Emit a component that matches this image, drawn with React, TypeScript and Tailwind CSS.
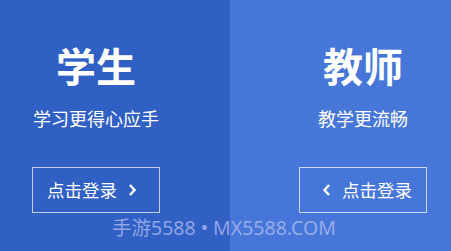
export default function App() {
  return (
    <div className="relative flex h-[251px] w-[451px] overflow-hidden font-['Noto_Sans','Noto_Sans_CJK_SC',sans-serif] text-white">
      <section className="flex w-[230px] bg-[#3060c4] pl-[32px] pt-[40px]">
        <Side title="学生" sub="学习更得心应手" dir="right" />
      </section>
      <section className="flex flex-1 justify-end bg-[#4677d8] pr-[24px] pt-[40px]">
        <Side title="教师" sub="教学更流畅" dir="left" />
      </section>
      <div className="pointer-events-none absolute left-[112px] top-[214px] text-[19.5px] leading-[28px] whitespace-nowrap text-[#b4bcef]/75">
        手游5588 • MX5588.COM
      </div>
    </div>
  )
}

function Side({ title, sub, dir }: { title: string; sub: string; dir: 'left' | 'right' }) {
  const pad = dir === 'left' ? 'pl-[8px]' : 'pr-[8px]'
  return (
    <div className="flex w-[128px] flex-col items-center">
      <h1 className="text-[40px] leading-[54px] font-bold">{title}</h1>
      <p className="mt-[13px] text-[18px] leading-[24px] whitespace-nowrap">{sub}</p>
      <button
        className={`mt-[36px] flex h-[46px] w-full items-center justify-center gap-[10px] border border-white/70 text-[17.5px] ${pad}`}
      >
        {dir === 'left' && <Chevron left />}
        <span>点击登录</span>
        {dir === 'right' && <Chevron />}
      </button>
    </div>
  )
}

function Chevron({ left }: { left?: boolean }) {
  return (
    <svg width="10" height="14" viewBox="0 0 10 14" fill="none" stroke="white" strokeWidth="2.4">
      {left ? <path d="M7 2 L2.5 7 L7 12" /> : <path d="M3 2 L7.5 7 L3 12" />}
    </svg>
  )
}
